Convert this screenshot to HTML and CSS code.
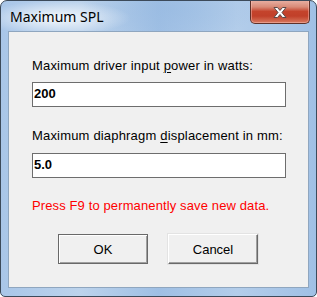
FILE: index.html
```html
<!DOCTYPE html>
<html>
<head>
<meta charset="utf-8">
<link rel="stylesheet" href="styles.css">
</head>
<body>
<div class="window">
  <div class="titlebar">
    <span class="title">Maximum SPL</span>
    <div class="close">
      <svg width="16" height="13" viewBox="0 0 16 13">
        <path d="M2 1.5 L5.5 1.5 L8 4.5 L10.5 1.5 L14 1.5 L10 6.5 L14 11.5 L10.5 11.5 L8 8.5 L5.5 11.5 L2 11.5 L6 6.5 Z" fill="#fff" stroke="#5b4a48" stroke-width="1" stroke-linejoin="round"/>
      </svg>
    </div>
  </div>
  <div class="client">
    <div class="label">Maximum driver input <u>p</u>ower in watts:</div>
    <div class="field">200</div>
    <div class="label second">Maximum diaphragm <u>d</u>isplacement in mm:</div>
    <div class="field second-field">5.0</div>
    <div class="note">Press F9 to permanently save new data.</div>
    <div class="buttons">
      <div class="btn default">OK</div>
      <div class="btn">Cancel</div>
    </div>
  </div>
</div>
</body>
</html>
```
FILE: styles.css
```css
html, body {
  margin: 0;
  padding: 0;
  background: #ffffff;
}
.window {
  box-sizing: border-box;
  width: 317px;
  height: 297px;
  border: 1px solid #3c4a5a;
  border-radius: 7px 7px 5px 5px;
  background: linear-gradient(to right, #a9c6e8 0%, #bcd3ec 25%, #9fbfe4 50%, #b3cdea 75%, #a0c0e5 100%);
  display: flex;
  flex-direction: column;
  overflow: hidden;
}
.titlebar {
  height: 30px;
  flex: none;
  display: flex;
  justify-content: space-between;
  align-items: flex-start;
  padding-left: 9px;
  padding-right: 6px;
  background:
    radial-gradient(ellipse 75px 17px at 55px 17px, rgba(255,255,255,0.85), rgba(255,255,255,0) 100%),
    radial-gradient(ellipse 90px 30px at 170px 8px, rgba(150,185,225,0.5), rgba(150,185,225,0) 100%);
}
.title {
  font-family: "Noto Sans", "Open Sans", sans-serif;
  font-size: 14px;
  color: #000;
  margin-top: 7px;
  line-height: 18px;
}
.close {
  box-sizing: border-box;
  width: 60px;
  height: 24px;
  margin-top: -1px;
  border: 1px solid #5e3129;
  border-top: none;
  border-radius: 0 0 5px 5px;
  background: linear-gradient(to bottom, #e9b3a6 0%, #d98b78 30%, #c4432c 50%, #c1402a 70%, #d87a60 100%);
  box-shadow: inset 0 0 0 1px rgba(255, 200, 190, 0.45);
  display: flex;
  align-items: center;
  justify-content: center;
}
.close svg {
  display: block;
  margin-top: 1px;
}
.client {
  box-sizing: border-box;
  height: 257px;
  margin: 0 7px;
  flex: none;
  background: #f0f0f0;
  border: 1px solid #8fa6bf;
  padding: 26px 22px 0 23px;
  font-family: "Liberation Sans", Arial, sans-serif;
  font-size: 13px;
  color: #000;
}
.label {
  line-height: 15px;
  height: 15px;
  white-space: nowrap;
  letter-spacing: 0.18px;
}
.label u {
  text-decoration-thickness: 1px;
  text-underline-offset: 2px;
}
.label.second {
  margin-top: 21px;
}
.field {
  box-sizing: border-box;
  margin-top: 9px;
  height: 25px;
  width: 254px;
  background: #fff;
  border: 1px solid #6d6d6d;
  padding: 3px 0 0 1px;
  font-weight: bold;
  line-height: 15px;
}
.field.second-field {
  margin-top: 10px;
  height: 25px;
}
.note {
  margin-top: 20px;
  line-height: 15px;
  color: #ff0000;
  white-space: nowrap;
  letter-spacing: 0.12px;
}
.buttons {
  display: flex;
  gap: 20px;
  margin-top: 21px;
  padding-left: 26px;
}
.btn {
  box-sizing: border-box;
  width: 90px;
  height: 30px;
  display: flex;
  align-items: center;
  justify-content: center;
  background: #f0f0f0;
  border-top: 1px solid #ffffff;
  border-left: 1px solid #ffffff;
  border-right: 1px solid #696969;
  border-bottom: 1px solid #696969;
  box-shadow: inset -1px -1px 0 #a0a0a0;
  outline: 1px solid #e3e3e3;
  outline-offset: 0;
}
.btn.default {
  border: 1px solid #696969;
  box-shadow: inset 1px 1px 0 #ffffff, inset -1px -1px 0 #a0a0a0;
  outline: none;
}
```
